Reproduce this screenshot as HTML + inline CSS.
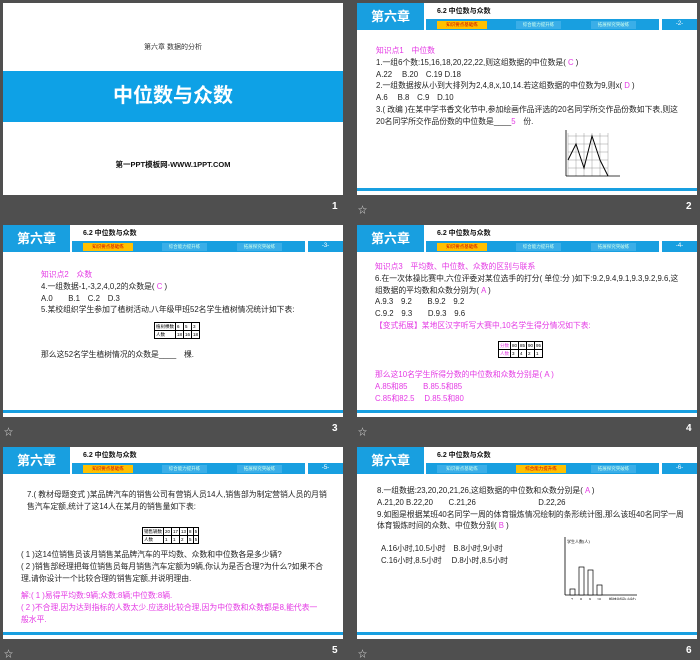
<!DOCTYPE html>
<html><head><meta charset="utf-8"><style>
*{margin:0;padding:0;box-sizing:border-box}
body{width:700px;height:658px;background:#4f4f4f;position:relative;overflow:hidden;font-family:"Liberation Sans","Noto Sans CJK SC",sans-serif}
.s{position:absolute;width:340px;height:192px;background:#fff;overflow:hidden}
.hb{position:absolute;left:0;top:0;width:67px;height:27px;background:#189fe0;color:#fff;font-weight:bold;font-size:13px;text-align:center;line-height:27px}
.ht{position:absolute;left:80px;top:3px;font-size:7px;font-weight:bold;color:#111}
.bar{position:absolute;left:69px;top:16px;width:233px;height:11px;background:#189fe0}
.pg{position:absolute;left:305px;top:16px;width:35px;height:11px;background:#189fe0;color:#fff;font-size:6px;text-align:center;line-height:11px}
.tab{position:absolute;top:2px;height:8px;font-size:4.5px;color:#cfe;text-align:center;line-height:8px;background:#3aaee8}
.tab.y{background:#ffc000;color:#c00}
.bl{position:absolute;left:0;bottom:4px;width:340px;height:3px;background:#189fe0}
.c{position:absolute;font-size:7.8px;line-height:11.8px;color:#222;white-space:nowrap}
.m{color:#e43ae4}
.n{position:absolute;color:#fff;font-size:10px;font-weight:bold}
.st{position:absolute;color:#ddd;font-size:9px}
table{border-collapse:collapse;position:absolute}
td{border:1px solid #000;font-size:4.5px;height:8px;padding:0 1px}
</style></head><body>

<div class="s" style="left:3px;top:3px">
<div style="position:absolute;top:39px;width:100%;text-align:center;font-size:7px;color:#333">第六章 数据的分析</div>
<div style="position:absolute;top:68px;width:100%;height:51px;background:#0ea1e6;color:#fff;font-size:20px;font-weight:bold;text-align:center;line-height:51px">中位数与众数</div>
<div style="position:absolute;top:156px;width:100%;text-align:center;font-size:7.5px;font-weight:bold;color:#111">第一PPT模板网-WWW.1PPT.COM</div>
</div>
<div class="n" style="left:332px;top:201px">1</div>

<div class="s" style="left:357px;top:3px">
<div class="hb">第六章</div><div class="ht">6.2 中位数与众数</div>
<div class="bar"><div class="tab y" style="left:11px;width:50px">知识要点基础练</div><div class="tab" style="left:90px;width:45px">综合能力提升练</div><div class="tab" style="left:165px;width:45px">拓展探究突破练</div></div><div class="pg">-2-</div>
<div class="c" style="left:19px;top:42px"><span class="m">知识点1　中位数</span><br>1.一组6个数:15,16,18,20,22,22,则这组数据的中位数是( <span class="m">C</span> )<br>A.22　 B.20　C.19 D.18<br>2.一组数据按从小到大排列为2,4,8,x,10,14.若这组数据的中位数为9,则x( <span class="m">D</span> )<br>A.6　 B.8　C.9　D.10<br>3.( 改编 )在某中学书香文化节中,参加绘画作品评选的20名同学所交作品份数如下表,则这<br>20名同学所交作品份数的中位数是____<span class="m">5</span>　份.</div>
<svg style="position:absolute;left:203px;top:125px" width="70" height="56"><g stroke="#999" stroke-width=".5"><path d="M8 5V48M16 5V48M24 5V48M32 5V48M40 5V48M48 5V48M8 8H48M8 16H48M8 24H48M8 32H48M8 40H48"/></g><path d="M6 48H60M6 48V2" stroke="#000" stroke-width=".8"/><path d="M8 32L16 16L24 40L32 8L40 32L48 48" fill="none" stroke="#000" stroke-width="1"/></svg>
<div class="bl"></div></div>
<div class="st" style="left:358px;top:203px">☆</div><div class="n" style="left:686px;top:201px">2</div>

<div class="s" style="left:3px;top:225px">
<div class="hb">第六章</div><div class="ht">6.2 中位数与众数</div>
<div class="bar"><div class="tab y" style="left:11px;width:50px">知识要点基础练</div><div class="tab" style="left:90px;width:45px">综合能力提升练</div><div class="tab" style="left:165px;width:45px">拓展探究突破练</div></div><div class="pg">-3-</div>
<div class="c" style="left:38px;top:44px"><span class="m">知识点2　众数</span><br>4.一组数据-1,-3,2,4,0,2的众数是( <span class="m">C</span> )<br>A.0　　B.1　C.2　D.3<br>5.某校组织学生参加了植树活动,八年级甲班52名学生植树情况统计如下表:</div>
<table style="left:151px;top:97px"><tr><td>植树棵数</td><td>6</td><td>5</td><td>3</td></tr><tr><td>人数</td><td>18</td><td>16</td><td>18</td></tr></table>
<div class="c" style="left:38px;top:124px">那么这52名学生植树情况的众数是____　棵.</div>
<div class="bl"></div></div>
<div class="st" style="left:4px;top:425px">☆</div><div class="n" style="left:332px;top:423px">3</div>

<div class="s" style="left:357px;top:225px">
<div class="hb">第六章</div><div class="ht">6.2 中位数与众数</div>
<div class="bar"><div class="tab y" style="left:11px;width:50px">知识要点基础练</div><div class="tab" style="left:90px;width:45px">综合能力提升练</div><div class="tab" style="left:165px;width:45px">拓展探究突破练</div></div><div class="pg">-4-</div>
<div class="c" style="left:18px;top:36px"><span class="m">知识点3　平均数、中位数、众数的区别与联系</span><br>6.在一次体操比赛中,六位评委对某位选手的打分( 单位:分 )如下:9.2,9.4,9.1,9.3,9.2,9.6,这<br>组数据的平均数和众数分别为( <span class="m">A</span> )<br>A.9.3　9.2　　B.9.2　9.2<br>C.9.2　9.3　　D.9.3　9.6<br><span class="m">【变式拓展】某地区汉字听写大赛中,10名学生得分情况如下表:</span></div>
<table style="left:141px;top:116px"><tr><td class="m">分数</td><td>80</td><td>85</td><td>90</td><td>95</td></tr><tr><td class="m">人数</td><td>3</td><td>4</td><td>2</td><td>1</td></tr></table>
<div class="c m" style="left:18px;top:144px">那么这10名学生所得分数的中位数和众数分别是( A )<br>A.85和85　　B.85.5和85<br>C.85和82.5　 D.85.5和80</div>
<div class="bl"></div></div>
<div class="st" style="left:358px;top:425px">☆</div><div class="n" style="left:686px;top:423px">4</div>

<div class="s" style="left:3px;top:447px">
<div class="hb">第六章</div><div class="ht">6.2 中位数与众数</div>
<div class="bar"><div class="tab y" style="left:11px;width:50px">知识要点基础练</div><div class="tab" style="left:90px;width:45px">综合能力提升练</div><div class="tab" style="left:165px;width:45px">拓展探究突破练</div></div><div class="pg">-5-</div>
<div class="c" style="left:24px;top:42px">7.( 教材母题变式 )某品牌汽车的销售公司有营销人员14人,销售部为制定营销人员的月销<br>售汽车定额,统计了这14人在某月的销售量如下表:</div>
<table style="left:139px;top:80px"><tr><td>销售辆数</td><td>20</td><td>17</td><td>13</td><td>8</td><td>5</td></tr><tr><td>人数</td><td>1</td><td>1</td><td>2</td><td>5</td><td>5</td></tr></table>
<div class="c" style="left:18px;top:102px">( 1 )这14位销售员该月销售某品牌汽车的平均数、众数和中位数各是多少辆?<br>( 2 )销售部经理把每位销售员每月销售汽车定额为9辆,你认为是否合理?为什么?如果不合<br>理,请你设计一个比较合理的销售定额,并说明理由.</div>
<div class="c m" style="left:18px;top:143px">解:( 1 )易得平均数:9辆;众数:8辆;中位数:8辆.<br>( 2 )不合理,因为达到指标的人数太少.应选8比较合理,因为中位数和众数都是8,能代表一<br>般水平.</div>
<div class="bl"></div></div>
<div class="st" style="left:4px;top:647px">☆</div><div class="n" style="left:332px;top:645px">5</div>

<div class="s" style="left:357px;top:447px">
<div class="hb">第六章</div><div class="ht">6.2 中位数与众数</div>
<div class="bar"><div class="tab" style="left:11px;width:50px">知识要点基础练</div><div class="tab y" style="left:90px;width:50px">综合能力提升练</div><div class="tab" style="left:165px;width:45px">拓展探究突破练</div></div><div class="pg">-6-</div>
<div class="c" style="left:20px;top:38px">8.一组数据:23,20,20,21,26,这组数据的中位数和众数分别是( <span class="m">A</span> )<br>A.21,20 B.22,20　　C.21,26　　　　　　　　D.22,26<br>9.如图是根据某班40名同学一周的体育锻炼情况绘制的条形统计图,那么该班40名同学一周<br>体育锻炼时间的众数、中位数分别( <span class="m">B</span> )</div>
<div class="c" style="left:24px;top:96px">A.16小时,10.5小时　B.8小时,9小时<br>C.16小时,8.5小时　 D.8小时,8.5小时</div>
<svg style="position:absolute;left:200px;top:88px" width="95" height="65" font-size="4" font-family="Liberation Serif"><path d="M8 60H80M8 60V2" stroke="#000" stroke-width=".8" fill="none"/><text x="10" y="8">学生人数(人)</text><g fill="#fff" stroke="#000" stroke-width=".7"><rect x="13" y="54" width="5" height="6"/><rect x="22" y="32" width="5" height="28"/><rect x="31" y="35" width="5" height="25"/><rect x="40" y="50" width="5" height="10"/></g><text x="14" y="66">7</text><text x="23" y="66">8</text><text x="32" y="66">9</text><text x="40" y="66">10</text><text x="52" y="66">锻炼时间(小时)</text></svg>
<div class="bl"></div></div>
<div class="st" style="left:358px;top:647px">☆</div><div class="n" style="left:686px;top:645px">6</div>
</body></html>
